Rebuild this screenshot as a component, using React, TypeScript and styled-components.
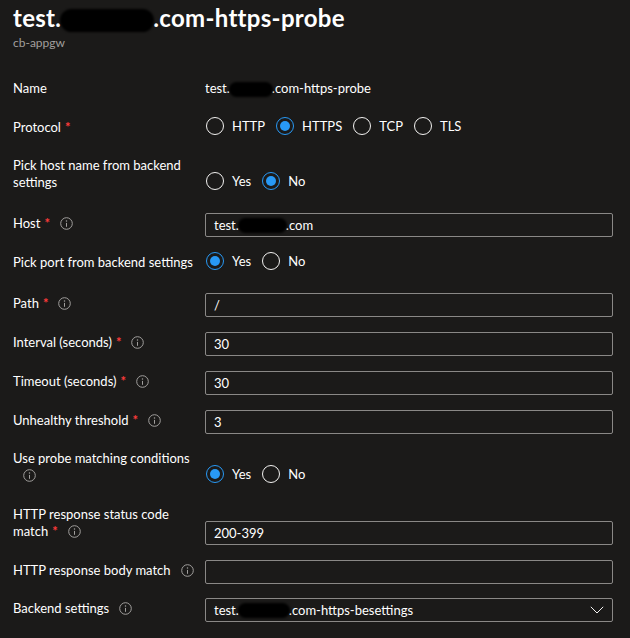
import React from 'react';
import styled, { createGlobalStyle } from 'styled-components';

const FONT = `Lato, "Noto Sans", "Liberation Sans", sans-serif`;

const GlobalStyle = createGlobalStyle`
  html, body {
    margin: 0;
    padding: 0;
    background: #1b1a19;
  }
  body {
    font-family: ${FONT};
    font-size: 13px;
    color: #ffffff;
  }
`;

const Page = styled.div`
  width: 630px;
  min-height: 638px;
  box-sizing: border-box;
  padding: 2px 17px 16px 13px;
  background: #1b1a19;
`;

const Header = styled.header`
  display: flex;
  flex-direction: column;
`;

const Title = styled.h1`
  margin: 0;
  font-size: 24px;
  line-height: 32px;
  font-weight: 700;
  letter-spacing: 0.3px;
  color: #ffffff;
  white-space: nowrap;
`;

const Subtitle = styled.div`
  font-size: 12px;
  line-height: 17px;
  color: #a19f9d;
`;

const Form = styled.div`
  display: flex;
  flex-direction: column;
`;

const Row = styled.div<{ $mt: number }>`
  display: grid;
  grid-template-columns: 192px 408px;
  align-items: end;
  margin-top: ${(p) => p.$mt}px;
`;

type Kind = 'text' | 'radio' | 'input';

const Label = styled.div<{ $kind: Kind }>`
  line-height: ${(p) => (p.$kind === 'text' ? '20px' : '17px')};
  padding-bottom: ${(p) => (p.$kind === 'input' ? 5 : 0)}px;
  color: #ffffff;
  white-space: nowrap;
`;

const Star = styled.span`
  color: #ff3b3b;
  font-weight: 700;
  margin-left: 4px;
`;

const InfoWrap = styled.span`
  display: inline-block;
  width: 13px;
  height: 13px;
  margin-left: 10px;
  vertical-align: -2px;
  svg {
    display: block;
  }
`;

const Value = styled.div`
  line-height: 20px;
  white-space: nowrap;
`;

const Redact = styled.span<{ $w: number; $h: number }>`
  display: inline-block;
  width: ${(p) => p.$w}px;
  height: ${(p) => p.$h}px;
  border-radius: ${(p) => p.$h / 2}px;
  background: #000;
  filter: blur(1.2px);
  vertical-align: middle;
  margin: 0 -1px;
`;

const RadioGroup = styled.div`
  display: flex;
  align-items: center;
  gap: 11px;
  height: 20px;
  padding-left: 1px;
`;

const RadioOption = styled.label`
  display: flex;
  align-items: center;
  gap: 8px;
  line-height: 17px;
  color: #ffffff;
`;

const RadioCircle = styled.span<{ $checked: boolean }>`
  width: 18px;
  height: 18px;
  box-sizing: border-box;
  border-radius: 50%;
  border: 1px solid ${(p) => (p.$checked ? '#2899f5' : '#f3f2f1')};
  display: flex;
  align-items: center;
  justify-content: center;
`;

const RadioDot = styled.span`
  width: 10px;
  height: 10px;
  border-radius: 50%;
  background: #2899f5;
`;

const Field = styled.div`
  height: 24px;
  box-sizing: border-box;
  border: 1px solid #8a8886;
  border-radius: 2px;
  padding: 0 8px;
  display: flex;
  align-items: center;
  justify-content: space-between;
  color: #ffffff;
  line-height: 20px;
  white-space: nowrap;
`;

const FieldText = styled.span`
  display: inline-flex;
  align-items: center;
`;

const Info = () => (
  <InfoWrap>
    <svg width="13" height="13" viewBox="0 0 13 13" fill="none">
      <circle cx="6.5" cy="6.5" r="5.8" stroke="#a19f9d" strokeWidth="1" />
      <circle cx="6.5" cy="4" r="0.75" fill="#a19f9d" />
      <line x1="6.5" y1="5.9" x2="6.5" y2="9.8" stroke="#a19f9d" strokeWidth="1" />
    </svg>
  </InfoWrap>
);

const Chevron = () => (
  <svg width="14" height="8" viewBox="0 0 14 8" fill="none">
    <polyline points="0.8,0.8 7,7 13.2,0.8" stroke="#f3f2f1" strokeWidth="1" fill="none" />
  </svg>
);

const Radios = ({ options, selected }: { options: string[]; selected: string }) => (
  <RadioGroup>
    {options.map((o) => (
      <RadioOption key={o}>
        <RadioCircle $checked={o === selected}>{o === selected && <RadioDot />}</RadioCircle>
        {o}
      </RadioOption>
    ))}
  </RadioGroup>
);

export default function App() {
  return (
    <>
      <GlobalStyle />
      <Page>
        <Header>
          <Title>
            test.<Redact $w={94} $h={23} />.com-https-probe
          </Title>
          <Subtitle>cb-appgw</Subtitle>
        </Header>
        <Form>
          <Row $mt={27}>
            <Label $kind="text">Name</Label>
            <Value>
              test.<Redact $w={44} $h={15} />.com-https-probe
            </Value>
          </Row>
          <Row $mt={18}>
            <Label $kind="radio">
              Protocol<Star>*</Star>
            </Label>
            <Radios options={['HTTP', 'HTTPS', 'TCP', 'TLS']} selected="HTTPS" />
          </Row>
          <Row $mt={21}>
            <Label $kind="radio">
              Pick host name from backend
              <br />
              settings
            </Label>
            <Radios options={['Yes', 'No']} selected="No" />
          </Row>
          <Row $mt={22}>
            <Label $kind="input">
              Host<Star>*</Star>
              <Info />
            </Label>
            <Field>
              <FieldText>
                test.<Redact $w={49} $h={15} />.com
              </FieldText>
            </Field>
          </Row>
          <Row $mt={14}>
            <Label $kind="radio">Pick port from backend settings</Label>
            <Radios options={['Yes', 'No']} selected="Yes" />
          </Row>
          <Row $mt={22}>
            <Label $kind="input">
              Path<Star>*</Star>
              <Info />
            </Label>
            <Field>/</Field>
          </Row>
          <Row $mt={15}>
            <Label $kind="input">
              Interval (seconds)<Star>*</Star>
              <Info />
            </Label>
            <Field>30</Field>
          </Row>
          <Row $mt={15}>
            <Label $kind="input">
              Timeout (seconds)<Star>*</Star>
              <Info />
            </Label>
            <Field>30</Field>
          </Row>
          <Row $mt={15}>
            <Label $kind="input">
              Unhealthy threshold<Star>*</Star>
              <Info />
            </Label>
            <Field>3</Field>
          </Row>
          <Row $mt={16}>
            <Label $kind="radio">
              Use probe matching conditions
              <br />
              <Info />
            </Label>
            <Radios options={['Yes', 'No']} selected="Yes" />
          </Row>
          <Row $mt={22}>
            <Label $kind="input">
              HTTP response status code
              <br />
              match<Star>*</Star>
              <Info />
            </Label>
            <Field>200-399</Field>
          </Row>
          <Row $mt={15}>
            <Label $kind="input">
              HTTP response body match
              <Info />
            </Label>
            <Field />
          </Row>
          <Row $mt={14}>
            <Label $kind="input">
              Backend settings
              <Info />
            </Label>
            <Field>
              <FieldText>
                test.<Redact $w={52} $h={15} />.com-https-besettings
              </FieldText>
              <Chevron />
            </Field>
          </Row>
        </Form>
      </Page>
    </>
  );
}
